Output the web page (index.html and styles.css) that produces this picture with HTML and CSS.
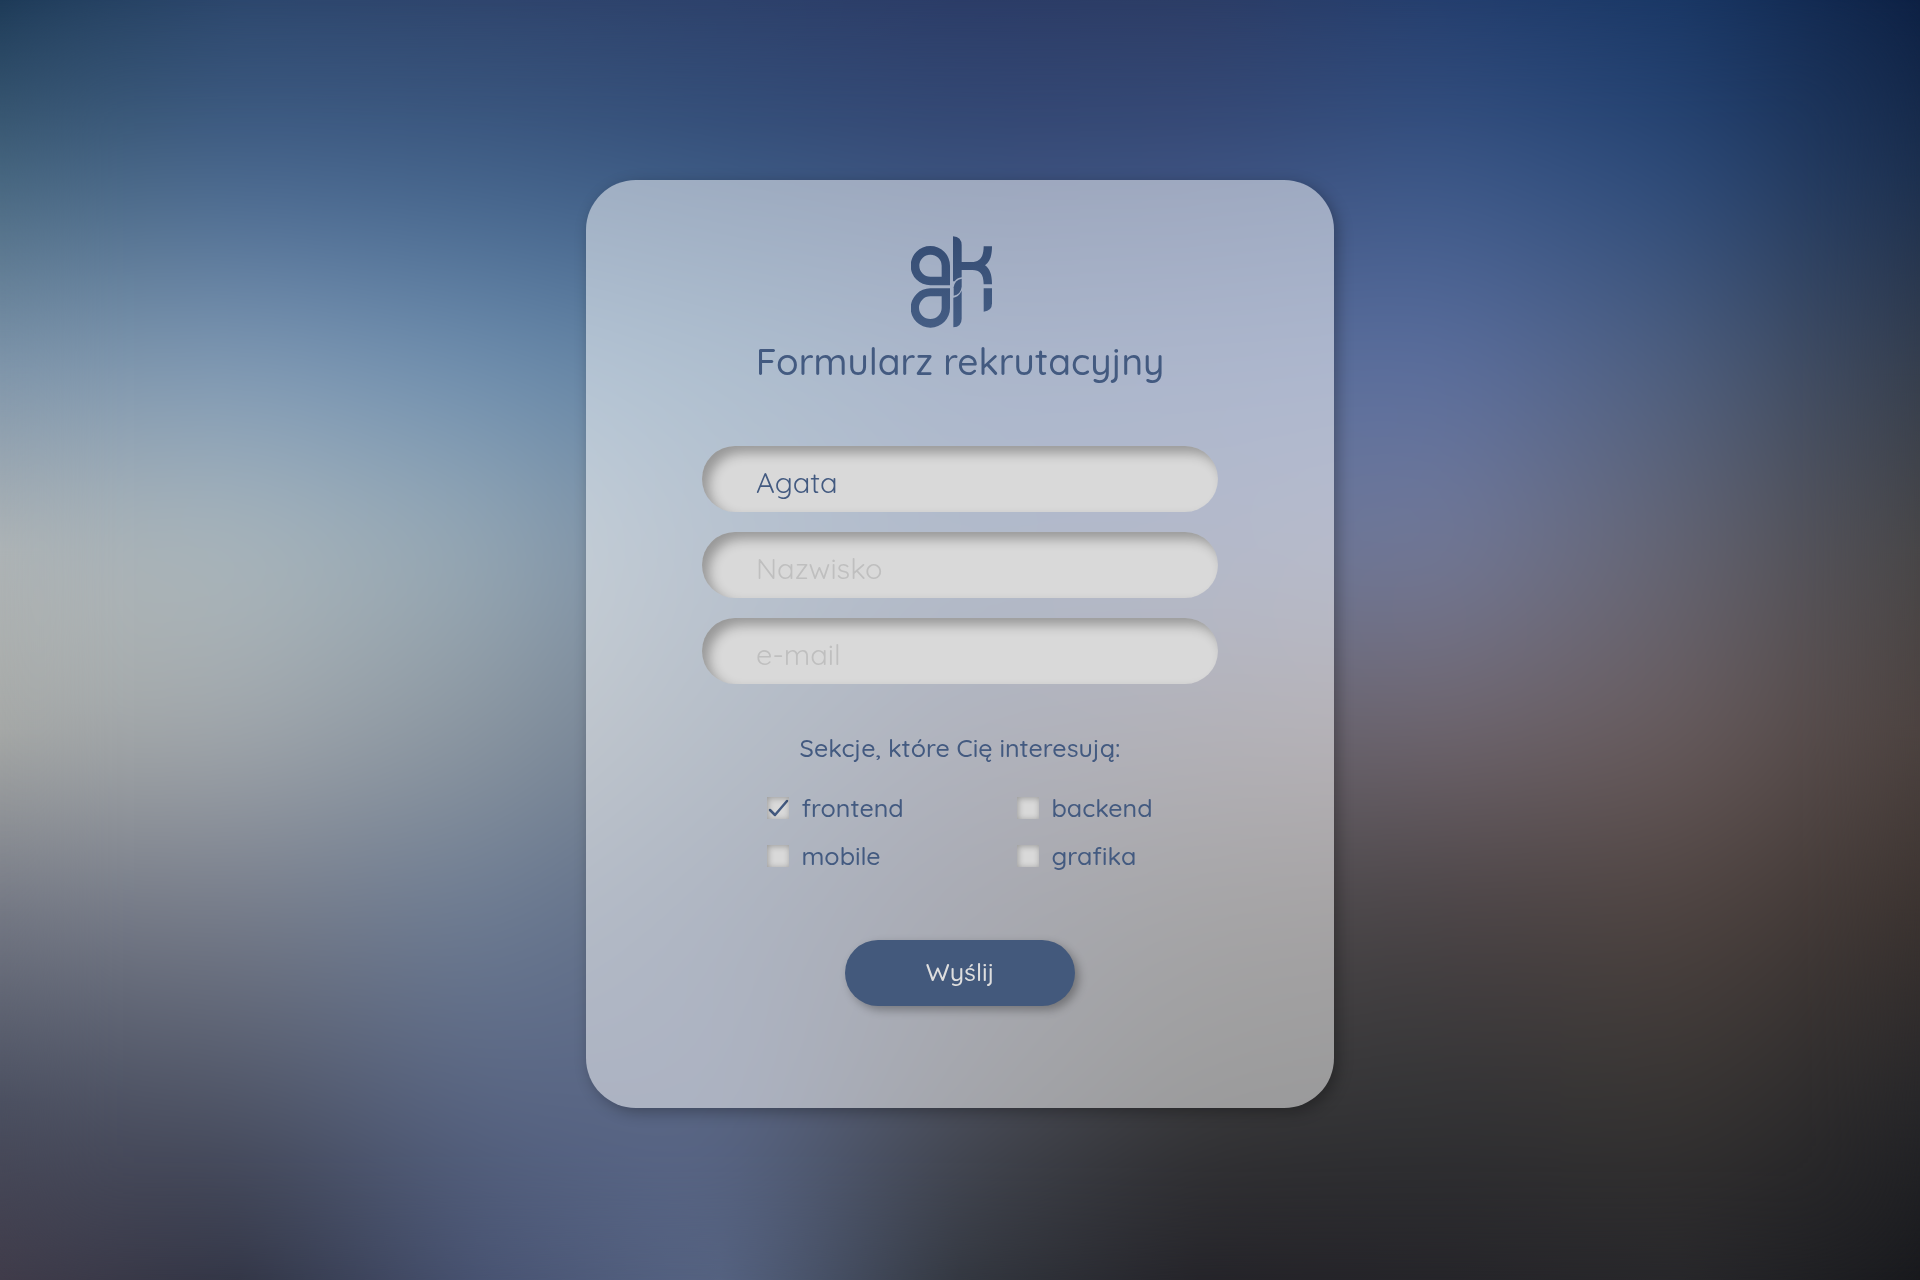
FILE: index.html
```
<!DOCTYPE html>
<html lang="pl">
<head>
  <meta charset="utf-8">
  <meta name="viewport" content="width=device-width, initial-scale=1">
  <title>Formularz rekrutacyjny</title>
  <link rel="stylesheet" href="styles.css">
</head>
<body>
  <div class="backdrop" aria-hidden="true">
    <div class="band band-1"></div>
    <div class="band band-2"></div>
    <div class="band band-3"></div>
    <div class="band band-4"></div>
    <div class="band band-5"></div>
    <div class="band band-6"></div>
    <div class="band band-7"></div>
    <div class="band band-8"></div>
  </div>
  <main class="page">
    <form class="card">
      <svg class="logo" viewBox="90 50 294 276" role="img" aria-label="akai">
        <defs>
          <linearGradient id="ink" x1="0" y1="50" x2="0" y2="325" gradientUnits="userSpaceOnUse">
            <stop offset="0" stop-color="#354c73"/>
            <stop offset="1" stop-color="#445d84"/>
          </linearGradient>
        </defs>
        <g fill="url(#ink)">
          <path fill-rule="evenodd" d="M148 80A59 59 0 0 1 207 139V198H148A59 59 0 0 1 148 80ZM148 106A33 33 0 0 0 148 172H182V139A34 34 0 0 0 148 106Z"/>
          <path fill-rule="evenodd" d="M148 207H207V265A59 59 0 1 1 148 207ZM148 231A34 34 0 1 0 182 265V231Z"/>
          <path d="M216 51Q242 53 242 78V128H272C296 128 308 114 308 81H333C333 112 326 127 312 138C326 148 333 164 333 195H308C308 163 296 152 274 152H242V174Q228 176 221 186H216Z"/>
          <path d="M242 178V202Q239 226 218 229V204Q221 181 242 178Z"/>
          <path d="M242 214V298Q242 322 217 324V235Q233 233 242 214Z"/>
          <path d="M308 207H333V252Q333 275 308 277Z"/>
        </g>
      </svg>
      <h1 class="title">Formularz rekrutacyjny</h1>

      <div class="fields">
        <input class="field" type="text" name="imie" value="Agata" placeholder="Imię" aria-label="Imię">
        <input class="field" type="text" name="nazwisko" placeholder="Nazwisko" aria-label="Nazwisko">
        <input class="field" type="email" name="email" placeholder="e-mail" aria-label="e-mail">
      </div>

      <fieldset class="sections">
        <legend class="legend">Sekcje, które Cię interesują:</legend>
        <div class="options">
          <label class="option"><input class="tick" type="checkbox" name="frontend" checked>frontend</label>
          <label class="option"><input class="tick" type="checkbox" name="backend">backend</label>
          <label class="option"><input class="tick" type="checkbox" name="mobile">mobile</label>
          <label class="option"><input class="tick" type="checkbox" name="grafika">grafika</label>
        </div>
      </fieldset>

      <button class="submit" type="submit">Wyślij</button>
    </form>
  </main>
</body>
</html>
```
FILE: styles.css
```
:root {
  --ink: #435a80;
  --paper: #d9d9d9;
  --font: Quicksand, Lato, sans-serif;
}

* {
  box-sizing: border-box;
}

body {
  margin: 0;
  color: var(--ink);
  background: #2c416b;
  font-family: var(--font);
  font-size: 25px;
  font-weight: 500;
}

/* Colour mesh: every band fades in over the one before it */
.backdrop {
  position: fixed;
  inset: 0;
  overflow: hidden;
}

.backdrop::after {
  content: "";
  position: absolute;
  inset: 0;
  backdrop-filter: blur(56px);
}

.band {
  position: absolute;
  inset: 0;
  background: linear-gradient(to right, var(--colors));
  -webkit-mask-image: linear-gradient(transparent var(--from), #000 var(--to));
  mask-image: linear-gradient(transparent var(--from), #000 var(--to));
}

.band-1 {
  --colors: #1b3855, #2a446a, #2d426a, #2c3f69, #2a3a65, #2b3b63, #223c6c, #183664, #0c1f42;
  -webkit-mask-image: none;
  mask-image: none;
}

.band-2 {
  --colors: #47677f, #48678f, #42628a, #3a5883, #3a507c, #3c5180, #3d5989, #2d4b7a, #1b2e4c;
  --from: 0%;
  --to: 14%;
}

.band-3 {
  --colors: #8096ab, #829cb7, #7090b0, #5f81a1, #586f99, #5b6f9b, #5d70a0, #4f6080, #343c4a;
  --from: 14%;
  --to: 29%;
}

.band-4 {
  --colors: #b0b5b6, #acb8bd, #97a9b5, #7488a1, #657797, #6a7597, #747b9a, #656573, #464444;
  --from: 29%;
  --to: 43%;
}

.band-5 {
  --colors: #a8aaa7, #a2a8ad, #8b96a0, #6d7d91, #62677b, #68646f, #70666e, #695c5d, #4b413e;
  --from: 43%;
  --to: 57%;
}

.band-6 {
  --colors: #747884, #777d8b, #6d7c93, #5d6b85, #515567, #4b4a4d, #4b4446, #4f4441, #3a322f;
  --from: 57%;
  --to: 71%;
}

.band-7 {
  --colors: #4a4f60, #505668, #596684, #5a6787, #4b4e59, #383839, #333436, #383533, #262629;
  --from: 71%;
  --to: 86%;
}

.band-8 {
  --colors: #403b49, #2e3141, #465170, #566483, #30343c, #222127, #242328, #26262a, #17181c;
  --from: 86%;
  --to: 100%;
}

.page {
  position: relative;
  display: grid;
  place-items: center;
  min-height: 100vh;
  padding: 32px 24px 24px;
}

.card {
  display: flex;
  flex-direction: column;
  align-items: center;
  width: 100%;
  max-width: 748px;
  padding: 56px 48px 102px;
  border-radius: 50px;
  background: rgba(255, 255, 255, 0.5);
  box-shadow: 4px 4px 15px rgba(0, 0, 0, 0.3);
}

.logo {
  width: 98px;
  height: 92px;
}

.title {
  margin: 8px 0 60px;
  font-size: 37px;
  font-weight: 500;
  line-height: 50px;
}

.fields {
  display: grid;
  gap: 20px;
  width: 100%;
  max-width: 516px;
}

.field {
  width: 100%;
  height: 66px;
  padding: 6px 54px 0;
  border: 0;
  border-radius: 33px;
  outline: 0;
  color: var(--ink);
  background: var(--paper);
  box-shadow: inset 7px 7px 12px rgba(0, 0, 0, 0.3);
  font-family: inherit;
  font-size: 29px;
}

.field::placeholder {
  color: #bfbfbf;
  opacity: 1;
}

.sections {
  width: 100%;
  max-width: 368px;
  margin: 48px 0 68px;
  padding: 0;
  border: 0;
}

.legend {
  margin: 0 auto;
  padding: 0;
  line-height: 32px;
}

.options {
  display: grid;
  grid-template-columns: 250px 1fr;
  gap: 16px 0;
  margin-top: 28px;
}

.option {
  display: flex;
  align-items: center;
  gap: 12px;
  line-height: 32px;
}

.tick {
  appearance: none;
  flex: none;
  width: 22px;
  height: 22px;
  margin: 0;
  background: var(--paper);
  box-shadow: inset 1px 1px 6px rgba(0, 0, 0, 0.3);
}

.tick:checked {
  background: url("data:image/svg+xml,%3Csvg xmlns='http://www.w3.org/2000/svg' viewBox='0 0 22 22'%3E%3Cpath d='M3 13l5 5L20 4' fill='none' stroke='%23435a80' stroke-width='2.5' stroke-linecap='round' stroke-linejoin='round'/%3E%3C/svg%3E") center / contain var(--paper);
}

.submit {
  width: 230px;
  height: 66px;
  padding: 0 0 4px;
  border: 0;
  border-radius: 33px;
  color: #dedede;
  background: #43597c;
  box-shadow: 4px 4px 10px rgba(0, 0, 0, 0.3);
  font-family: inherit;
  font-size: 25px;
  font-weight: 500;
}
```
